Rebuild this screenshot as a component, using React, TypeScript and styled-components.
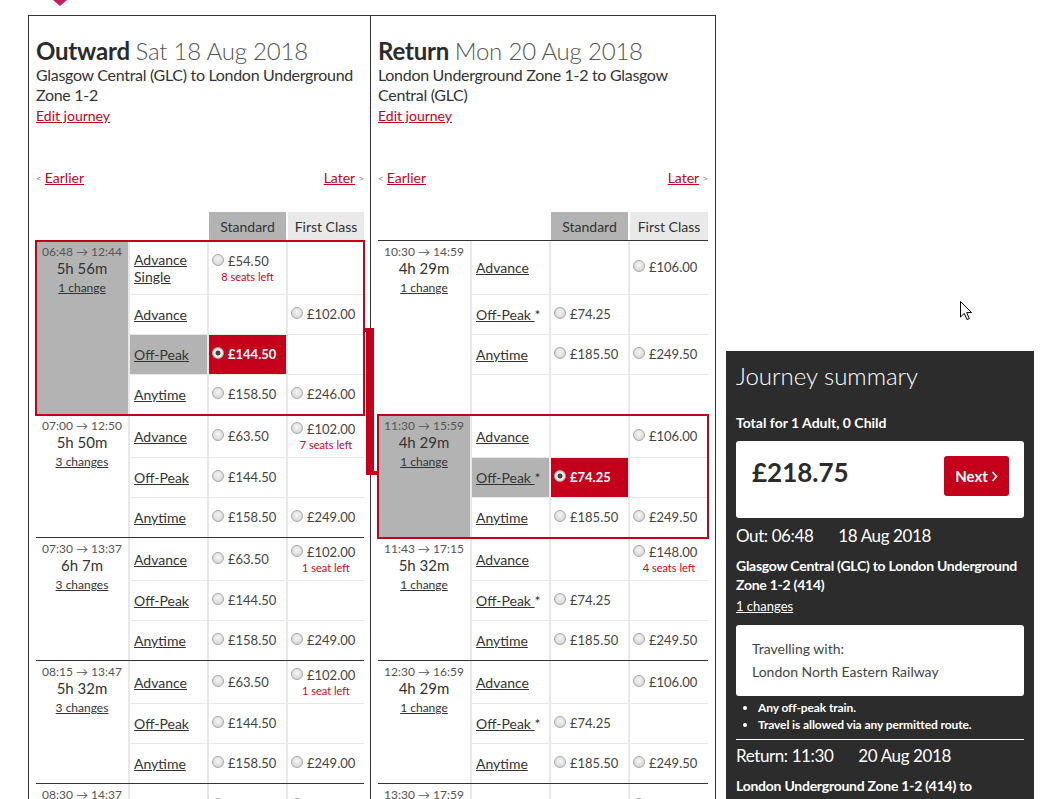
import React from 'react';
import styled, { createGlobalStyle, css } from 'styled-components';

const RED = '#c4001a';
const SEL_GREY = '#b3b3b3';
const LINE = '#e8e8e8';
const DARK = '#333333';

const Global = createGlobalStyle`
  html, body { margin: 0; padding: 0; background: #fff; }
  body { font-family: Lato, "Open Sans", Arial, sans-serif; color: #333; overflow: hidden; }
  * { box-sizing: border-box; }
`;

const Page = styled.div`
  position: relative;
  display: flex;
  align-items: flex-start;
  padding-left: 28px;
  height: 799px;
  overflow: hidden;
`;

const Main = styled.div`
  display: flex;
  flex-direction: column;
`;

const TopStrip = styled.div`
  height: 15px;
`;

const Pointer = styled.div`
  margin-left: 25px;
  width: 0;
  height: 0;
  border-left: 7px solid transparent;
  border-right: 7px solid transparent;
  border-top: 6px solid #c51f5d;
`;

const Panels = styled.div`
  display: flex;
  border: 1px solid ${DARK};
  border-bottom: none;
  height: 800px;
`;

const Panel = styled.section<{ $first?: boolean }>`
  width: ${p => (p.$first ? 342 : 344)}px;
  padding: 20px ${p => (p.$first ? '6px 0 7px' : '7px 0 7px')};
  ${p => p.$first && css`border-right: 1px solid ${DARK};`}
`;

const Title = styled.h2`
  margin: 0;
  font-size: 24px;
  line-height: 29px;
  font-weight: 700;
  color: #2b2b2b;
  white-space: nowrap;
  letter-spacing: -0.2px;
`;

const TitleDate = styled.span`
  font-weight: 300;
  color: #555;
`;

const Route = styled.p`
  margin: 0;
  font-size: 16px;
  line-height: 20px;
  color: #333;
  letter-spacing: -0.3px;
`;

const RedLink = styled.a`
  color: ${RED};
  text-decoration: underline;
  font-size: 14px;
  line-height: 20px;
`;

const EditRow = styled.div`
  line-height: 20px;
`;

const Pager = styled.div`
  display: flex;
  justify-content: space-between;
  margin-top: 42px;
  line-height: 20px;
`;

const PagerItem = styled.span`
  display: flex;
  align-items: center;
  gap: 3px;
`;

const Chev = styled.span`
  font-size: 10px;
  color: #888;
`;

const Table = styled.div`
  margin-top: 24px;
`;

const HeadRow = styled.div`
  display: grid;
  grid-template-columns: 92px 79px 79px 1fr;
  height: 29px;
  border-bottom: 1px solid ${DARK};
`;

const HeadCell = styled.div<{ $tone?: 'std' | 'first' }>`
  border-left: 2px solid #fff;
  display: flex;
  align-items: center;
  justify-content: center;
  font-size: 14px;
  color: #333;
  background: ${p => (p.$tone === 'std' ? SEL_GREY : p.$tone === 'first' ? '#e9e9e9' : 'transparent')};
`;

const JourneyBlock = styled.div<{ $selected?: boolean }>`
  display: grid;
  grid-template-columns: 92px 1fr;
  border-bottom: 1px solid ${DARK};
  ${p =>
    p.$selected &&
    css`
      position: relative;
      z-index: 1;
      border-bottom-color: #fff;
      outline: 2px solid ${RED};
      outline-offset: -1px;
    `}
`;

const Info = styled.div<{ $selected?: boolean }>`
  background: ${p => (p.$selected ? SEL_GREY : 'transparent')};
  text-align: center;
  padding-top: 3px;
`;

const Times = styled.div`
  font-size: 12px;
  line-height: 16px;
  color: #555;
`;

const Duration = styled.div`
  font-size: 15px;
  line-height: 16px;
  color: #333;
`;

const Changes = styled.a`
  display: inline-block;
  font-size: 12px;
  line-height: 14px;
  color: #333;
  text-decoration: underline;
`;

const Fares = styled.div`
  display: flex;
  flex-direction: column;
`;

const FareRow = styled.div<{ $h: number }>`
  display: grid;
  grid-template-columns: 79px 79px 1fr;
  height: ${p => p.$h}px;
  & + & {
    border-top: 1px solid ${LINE};
  }
`;

const LabelCell = styled.div<{ $selected?: boolean }>`
  border-left: 2px solid ${LINE};
  background: ${p => (p.$selected ? SEL_GREY : 'transparent')};
  display: flex;
  align-items: center;
  padding: 0 2px 0 4px;
  font-size: 14px;
  line-height: 17px;
  color: #333;
`;

const FareLink = styled.a`
  color: #333;
  text-decoration: underline;
`;

const PriceCell = styled.div<{ $selected?: boolean }>`
  border-left: 2px solid ${LINE};
  background: ${p => (p.$selected ? RED : 'transparent')};
  display: flex;
  flex-direction: column;
  justify-content: center;
  padding: 0 0 0 3px;
  color: ${p => (p.$selected ? '#fff' : '#444')};
  font-weight: ${p => (p.$selected ? 700 : 400)};
  font-size: 13px;
`;

const PriceLine = styled.div`
  display: flex;
  align-items: flex-start;
  gap: 4px;
  line-height: 17px;
`;

const Radio = styled.span<{ $checked?: boolean }>`
  flex: none;
  width: 12px;
  height: 12px;
  margin-top: 1px;
  border-radius: 50%;
  border: 1px solid #a8a8a8;
  background: radial-gradient(circle at 50% 40%, #f6f6f6 0%, #dcdcdc 65%, #c9c9c9 100%);
  ${p =>
    p.$checked &&
    css`
      background: radial-gradient(circle at 50% 50%, #444 0, #444 2.2px, #efefef 2.8px, #d6d6d6 100%);
    `}
`;

const Seats = styled.div`
  color: #d0011b;
  font-size: 11px;
  line-height: 13px;
  text-align: center;
  padding-right: 3px;
`;

const Connector = styled.div`
  position: absolute;
  left: 366px;
  top: 328px;
  width: 8px;
  height: 147px;
  background: ${RED};
  z-index: 3;
  &::before {
    content: '';
    position: absolute;
    left: -3px;
    top: 0;
    width: 3px;
    height: 4px;
    background: ${RED};
  }
  &::after {
    content: '';
    position: absolute;
    left: 8px;
    bottom: 0;
    width: 4px;
    height: 4px;
    background: ${RED};
  }
`;

const Sidebar = styled.aside`
  margin-left: 10px;
  margin-top: 351px;
  width: 308px;
  min-height: 460px;
  background: #2c2c2c;
  color: #fff;
  padding: 10px 10px 0 10px;
`;

const SumTitle = styled.h3`
  margin: 0;
  font-size: 24px;
  line-height: 29px;
  font-weight: 300;
  color: #fff;
`;

const TotalLabel = styled.div`
  margin-top: 24px;
  font-size: 14px;
  line-height: 18px;
  font-weight: 700;
`;

const WhiteBox = styled.div<{ $pad: string }>`
  background: #fff;
  border-radius: 3px;
  color: #2b2b2b;
  padding: ${p => p.$pad};
`;

const PriceBox = styled(WhiteBox)`
  margin-top: 9px;
  height: 77px;
  display: flex;
  justify-content: space-between;
  align-items: flex-start;
`;

const Total = styled.div`
  margin-top: 1px;
  font-size: 26px;
  line-height: 30px;
  font-weight: 700;
  color: #2b2b2b;
`;

const NextButton = styled.button`
  width: 65px;
  height: 40px;
  border: none;
  border-radius: 3px;
  background: ${RED};
  color: #fff;
  font-family: inherit;
  font-size: 15px;
  font-weight: 700;
  display: flex;
  align-items: center;
  justify-content: center;
  gap: 3px;
  padding: 0;
`;

const LegHead = styled.div<{ $gap: number }>`
  display: flex;
  gap: ${p => p.$gap}px;
  font-size: 17px;
  line-height: 22px;
  letter-spacing: -0.4px;
`;

const LegRoute = styled.div`
  margin-top: 9px;
  font-size: 14px;
  line-height: 19px;
  font-weight: 700;
  letter-spacing: -0.25px;
`;

const LegChanges = styled.a`
  display: inline-block;
  margin-top: 3px;
  font-size: 13px;
  line-height: 18px;
  color: #fff;
  text-decoration: underline;
`;

const TravelBox = styled(WhiteBox)`
  margin-top: 10px;
  font-size: 14px;
  line-height: 23px;
  color: #444;
`;

const Notes = styled.ul`
  margin: 3px 0 0 0;
  padding-left: 22px;
  font-size: 12px;
  line-height: 17px;
  font-weight: 700;
  letter-spacing: -0.1px;
`;

const Rule = styled.hr`
  margin: 6px 0 0 0;
  border: none;
  border-top: 1px solid #fff;
`;

const ReturnHead = styled(LegHead)`
  margin-top: 5px;
`;

const Cursor = styled.svg`
  position: absolute;
  left: 960px;
  top: 301px;
  z-index: 5;
`;

type Fare = { price: string; seats?: string; selected?: boolean } | null;
type Row = { label: string; star?: boolean; labelSelected?: boolean; std?: Fare; first?: Fare; h: number };
type Journey = { times: [string, string]; dur: string; changes: string; selected?: boolean; rows: Row[] };

const adv = (std: Fare, first: Fare, h = 42): Row => ({ label: 'Advance', std, first, h });

const outward: Journey[] = [
  {
    times: ['06:48', '12:44'],
    dur: '5h 56m',
    changes: '1 change',
    selected: true,
    rows: [
      { label: 'Advance Single', std: { price: '£54.50', seats: '8 seats left' }, first: null, h: 53 },
      { label: 'Advance', std: null, first: { price: '£102.00' }, h: 40 },
      { label: 'Off-Peak', labelSelected: true, std: { price: '£144.50', selected: true }, first: null, h: 40 },
      { label: 'Anytime', std: { price: '£158.50' }, first: { price: '£246.00' }, h: 40 },
    ],
  },
  {
    times: ['07:00', '12:50'],
    dur: '5h 50m',
    changes: '3 changes',
    rows: [
      adv({ price: '£63.50' }, { price: '£102.00', seats: '7 seats left' }),
      { label: 'Off-Peak', std: { price: '£144.50' }, first: null, h: 40 },
      { label: 'Anytime', std: { price: '£158.50' }, first: { price: '£249.00' }, h: 40 },
    ],
  },
  {
    times: ['07:30', '13:37'],
    dur: '6h 7m',
    changes: '3 changes',
    rows: [
      adv({ price: '£63.50' }, { price: '£102.00', seats: '1 seat left' }),
      { label: 'Off-Peak', std: { price: '£144.50' }, first: null, h: 40 },
      { label: 'Anytime', std: { price: '£158.50' }, first: { price: '£249.00' }, h: 40 },
    ],
  },
  {
    times: ['08:15', '13:47'],
    dur: '5h 32m',
    changes: '3 changes',
    rows: [
      adv({ price: '£63.50' }, { price: '£102.00', seats: '1 seat left' }),
      { label: 'Off-Peak', std: { price: '£144.50' }, first: null, h: 40 },
      { label: 'Anytime', std: { price: '£158.50' }, first: { price: '£249.00' }, h: 40 },
    ],
  },
  {
    times: ['08:30', '14:37'],
    dur: '6h 7m',
    changes: '3 changes',
    rows: [
      adv({ price: '£63.50' }, { price: '£102.00' }),
      { label: 'Off-Peak', std: { price: '£144.50' }, first: null, h: 40 },
    ],
  },
];

const inbound: Journey[] = [
  {
    times: ['10:30', '14:59'],
    dur: '4h 29m',
    changes: '1 change',
    rows: [
      { label: 'Advance', std: null, first: { price: '£106.00' }, h: 53 },
      { label: 'Off-Peak', star: true, std: { price: '£74.25' }, first: null, h: 40 },
      { label: 'Anytime', std: { price: '£185.50' }, first: { price: '£249.50' }, h: 40 },
      { label: '', std: null, first: null, h: 40 },
    ],
  },
  {
    times: ['11:30', '15:59'],
    dur: '4h 29m',
    changes: '1 change',
    selected: true,
    rows: [
      adv(null, { price: '£106.00' }),
      { label: 'Off-Peak', star: true, labelSelected: true, std: { price: '£74.25', selected: true }, first: null, h: 40 },
      { label: 'Anytime', std: { price: '£185.50' }, first: { price: '£249.50' }, h: 40 },
    ],
  },
  {
    times: ['11:43', '17:15'],
    dur: '5h 32m',
    changes: '1 change',
    rows: [
      adv(null, { price: '£148.00', seats: '4 seats left' }),
      { label: 'Off-Peak', star: true, std: { price: '£74.25' }, first: null, h: 40 },
      { label: 'Anytime', std: { price: '£185.50' }, first: { price: '£249.50' }, h: 40 },
    ],
  },
  {
    times: ['12:30', '16:59'],
    dur: '4h 29m',
    changes: '1 change',
    rows: [
      adv(null, { price: '£106.00' }),
      { label: 'Off-Peak', star: true, std: { price: '£74.25' }, first: null, h: 40 },
      { label: 'Anytime', std: { price: '£185.50' }, first: { price: '£249.50' }, h: 40 },
    ],
  },
  {
    times: ['13:30', '17:59'],
    dur: '4h 29m',
    changes: '1 change',
    rows: [
      adv(null, { price: '£106.00' }),
      { label: 'Off-Peak', star: true, std: { price: '£74.25' }, first: null, h: 40 },
    ],
  },
];

function PriceBlock({ fare }: { fare?: Fare }) {
  return (
    <PriceCell $selected={!!fare?.selected}>
      {fare && (
        <>
          <PriceLine>
            <Radio $checked={fare.selected} />
            <span>{fare.price}</span>
          </PriceLine>
          {fare.seats && <Seats>{fare.seats}</Seats>}
        </>
      )}
    </PriceCell>
  );
}

function JourneyRows({ journey }: { journey: Journey }) {
  return (
    <JourneyBlock $selected={journey.selected}>
      <Info $selected={journey.selected}>
        <Times>
          {journey.times[0]} → {journey.times[1]}
        </Times>
        <Duration>{journey.dur}</Duration>
        <Changes>{journey.changes}</Changes>
      </Info>
      <Fares>
        {journey.rows.map((r, i) => (
          <FareRow key={i} $h={r.h}>
            <LabelCell $selected={r.labelSelected}>
              {r.label && (
                <span>
                  <FareLink>{r.star ? r.label + ' ' : r.label}</FareLink>
                  {r.star ? '*' : ''}
                </span>
              )}
            </LabelCell>
            <PriceBlock fare={r.std} />
            <PriceBlock fare={r.first} />
          </FareRow>
        ))}
      </Fares>
    </JourneyBlock>
  );
}

function DirectionPanel({
  first,
  title,
  date,
  route,
  journeys,
}: {
  first?: boolean;
  title: string;
  date: string;
  route: string;
  journeys: Journey[];
}) {
  return (
    <Panel $first={first}>
      <Title>
        {title} <TitleDate>{date}</TitleDate>
      </Title>
      <Route>{route}</Route>
      <EditRow>
        <RedLink>Edit journey</RedLink>
      </EditRow>
      <Pager>
        <PagerItem>
          <Chev>&lt;</Chev>
          <RedLink>Earlier</RedLink>
        </PagerItem>
        <PagerItem>
          <RedLink>Later</RedLink>
          <Chev>&gt;</Chev>
        </PagerItem>
      </Pager>
      <Table>
        <HeadRow>
          <div />
          <div />
          <HeadCell $tone="std">Standard</HeadCell>
          <HeadCell $tone="first">First Class</HeadCell>
        </HeadRow>
        {journeys.map((j, i) => (
          <JourneyRows key={i} journey={j} />
        ))}
      </Table>
    </Panel>
  );
}

export default function App() {
  return (
    <>
      <Global />
      <Page>
        <Main>
          <TopStrip>
            <Pointer />
          </TopStrip>
          <Panels>
            <DirectionPanel
              first
              title="Outward"
              date="Sat 18 Aug 2018"
              route="Glasgow Central (GLC) to London Underground Zone 1-2"
              journeys={outward}
            />
            <DirectionPanel
              title="Return"
              date="Mon 20 Aug 2018"
              route="London Underground Zone 1-2 to Glasgow Central (GLC)"
              journeys={inbound}
            />
          </Panels>
        </Main>
        <Sidebar>
          <SumTitle>Journey summary</SumTitle>
          <TotalLabel>Total for 1 Adult, 0 Child</TotalLabel>
          <PriceBox $pad="15px 15px 0 16px">
            <Total>£218.75</Total>
            <NextButton>
              Next
              <svg width="7" height="11" viewBox="0 0 7 11">
                <polyline points="1.5,1 5.5,5.5 1.5,10" fill="none" stroke="#fff" strokeWidth="1.6" />
              </svg>
            </NextButton>
          </PriceBox>
          <LegHead $gap={25} style={{ marginTop: 7 }}>
            <span>Out: 06:48</span>
            <span>18 Aug 2018</span>
          </LegHead>
          <LegRoute>Glasgow Central (GLC) to London Underground Zone 1-2 (414)</LegRoute>
          <LegChanges>1 changes</LegChanges>
          <TravelBox $pad="12px 16px 13px 16px">
            <div>Travelling with:</div>
            <div>London North Eastern Railway</div>
          </TravelBox>
          <Notes>
            <li>Any off-peak train.</li>
            <li>Travel is allowed via any permitted route.</li>
          </Notes>
          <Rule />
          <ReturnHead $gap={25}>
            <span>Return: 11:30</span>
            <span>20 Aug 2018</span>
          </ReturnHead>
          <LegRoute>London Underground Zone 1-2 (414) to Glasgow Central (GLC)</LegRoute>
        </Sidebar>
        <Connector />
        <Cursor width="13" height="20" viewBox="0 0 13 20">
          <path d="M0.5 0.5 L0.5 16 L4.3 12.4 L7 18.6 L9.3 17.6 L6.7 11.6 L11.6 11.6 Z" fill="#fff" stroke="#000" strokeWidth="1" />
        </Cursor>
      </Page>
    </>
  );
}
